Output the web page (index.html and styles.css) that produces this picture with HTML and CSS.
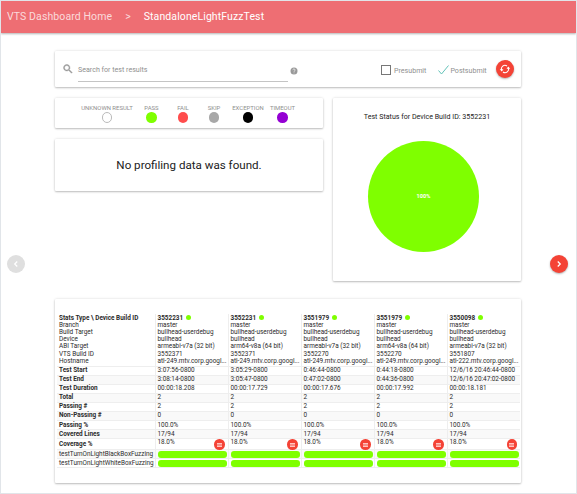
FILE: index.html
```html
<!DOCTYPE html>
<html lang="en">
<head>
<meta charset="utf-8">
<title>VTS Dashboard</title>
<link rel="stylesheet" href="styles.css">
</head>
<body>
<nav class="topbar"><a class="home">VTS Dashboard Home</a><span class="sep">&gt;</span><a class="current">StandaloneLightFuzzTest</a></nav>
<button class="round prev" aria-label="Previous"><svg viewBox="0 0 24 24"><path d="M15 6l-6 6 6 6"/></svg></button>
<button class="round next" aria-label="Next"><svg viewBox="0 0 24 24"><path d="M9 6l6 6-6 6"/></svg></button>
<main>
  <section class="card search">
    <svg class="lens" viewBox="0 0 24 24"><path d="M15.5 14h-.8l-.3-.3A6.5 6.5 0 1 0 13.700 14.400l.3.3v.8l5 5 1.500-1.500zm-6 0a4.500 4.500 0 1 1 0-9 4.500 4.500 0 0 1 0 9z"/></svg>
    <div class="field">Search for test results</div>
    <svg class="help" viewBox="0 0 24 24"><circle cx="12" cy="12" r="10.500"/><path d="M8.500 9.500c0-5 7-4.500 7-.5 0 2.500-3.500 2.500-3.500 5.500M12 16.500v2.500"/></svg>
    <label class="pre"><span class="box"></span>Presubmit</label>
    <label class="post"><svg viewBox="0 0 11 10"><path d="M.5 5.500l3 3.500L10.500.5"/></svg>Postsubmit</label>
    <button class="round refresh" aria-label="Refresh"><svg viewBox="0 0 24 24"><path d="M5.500 14.500a7 7 0 0 1 10.500-8.500M18.500 9.500a7 7 0 0 1-10.500 8.500"/><path class="tip" d="M1.500 12.500h7.500l-3.500 4.500zM22.500 11.500h-7.500l3.500-4.500z"/></svg></button>
  </section>
  <div class="columns">
    <div class="left">
      <section class="card legend">
        <div class="key k1">UNKNOWN RESULT<i class="unknown"></i></div>
        <div class="key k2">PASS<i class="pass"></i></div>
        <div class="key k3">FAIL<i class="fail"></i></div>
        <div class="key k4">SKIP<i class="skip"></i></div>
        <div class="key k5">EXCEPTION<i class="exception"></i></div>
        <div class="key k6">TIMEOUT<i class="timeout"></i></div>
      </section>
      <section class="card profiling">No profiling data was found.</section>
    </div>
    <section class="card status">
      <h2>Test Status for Device Build ID: 3552231</h2>
      <div class="pie">100%</div>
    </section>
  </div>
  <section class="card results">
    <table>
      <colgroup><col class="names"><col><col><col><col><col></colgroup>
      <tbody>
      <tr class="head">
        <th><b>Stats Type \ Device Build ID</b><br>Branch<br>Build Target<br>Device<br>ABI Target<br>VTS Build ID<br>Hostname</th>
        <td><b>3552231</b><i class="dot"></i><br>master<br>bullhead-userdebug<br>bullhead<br>armeabi-v7a (32 bit)<br>3552371<br>atl-249.mtv.corp.googl...</td>
        <td><b>3552231</b><i class="dot"></i><br>master<br>bullhead-userdebug<br>bullhead<br>arm64-v8a (64 bit)<br>3552371<br>atl-249.mtv.corp.googl...</td>
        <td><b>3551979</b><i class="dot"></i><br>master<br>bullhead-userdebug<br>bullhead<br>armeabi-v7a (32 bit)<br>3552270<br>atl-249.mtv.corp.googl...</td>
        <td><b>3551979</b><i class="dot"></i><br>master<br>bullhead-userdebug<br>bullhead<br>arm64-v8a (64 bit)<br>3552270<br>atl-249.mtv.corp.googl...</td>
        <td><b>3550098</b><i class="dot"></i><br>master<br>bullhead-userdebug<br>bullhead<br>armeabi-v7a (32 bit)<br>3551807<br>atl-222.mtv.corp.googl...</td>
      </tr>
      <tr><th>Test Start</th><td>3:07:56-0800</td><td>3:05:29-0800</td><td>0:46:44-0800</td><td>0:44:18-0800</td><td>12/6/16 20:46:44-0800</td></tr>
      <tr><th>Test End</th><td>3:08:14-0800</td><td>3:05:47-0800</td><td>0:47:02-0800</td><td>0:44:36-0800</td><td>12/6/16 20:47:02-0800</td></tr>
      <tr><th>Test Duration</th><td>00:00:18.208</td><td>00:00:17.729</td><td>00:00:17.676</td><td>00:00:17.992</td><td>00:00:18.181</td></tr>
      <tr><th>Total</th><td>2</td><td>2</td><td>2</td><td>2</td><td>2</td></tr>
      <tr><th>Passing #</th><td>2</td><td>2</td><td>2</td><td>2</td><td>2</td></tr>
      <tr><th>Non-Passing #</th><td>0</td><td>0</td><td>0</td><td>0</td><td>0</td></tr>
      <tr><th>Passing %</th><td>100.0%</td><td>100.0%</td><td>100.0%</td><td>100.0%</td><td>100.0%</td></tr>
      <tr><th>Covered Lines</th><td>17/94</td><td>17/94</td><td>17/94</td><td>17/94</td><td>17/94</td></tr>
      <tr class="coverage"><th>Coverage %</th>
        <td><div class="cov">18.0%<span class="menu"><i></i></span></div></td>
        <td><div class="cov">18.0%<span class="menu"><i></i></span></div></td>
        <td><div class="cov">18.0%<span class="menu"><i></i></span></div></td>
        <td><div class="cov">18.0%<span class="menu"><i></i></span></div></td>
        <td><div class="cov">18.0%<span class="menu"><i></i></span></div></td></tr>
      <tr class="case"><th>testTurnOnLightBlackBoxFuzzing</th><td><div class="bar"></div></td><td><div class="bar"></div></td><td><div class="bar"></div></td><td><div class="bar"></div></td><td><div class="bar"></div></td></tr>
      <tr class="case"><th>testTurnOnLightWhiteBoxFuzzing</th><td><div class="bar"></div></td><td><div class="bar"></div></td><td><div class="bar"></div></td><td><div class="bar"></div></td><td><div class="bar"></div></td></tr>
      </tbody>
    </table>
  </section>
</main>
</body>
</html>
```
FILE: styles.css
```css
* { box-sizing: border-box; }
body {
  margin: 0;
  height: 494px;
  overflow: hidden;
  border: 1px solid #e1e5e9;
  background: #fff;
  color: #2b2b2b;
  font-family: Roboto, "Liberation Sans", sans-serif;
}
.topbar {
  display: flex;
  align-items: center;
  height: 32px;
  padding: 0 0 1px 6px;
  background: #ee6e73;
  box-shadow: 0 1px 2px rgba(0, 0, 0, .3);
  color: #fff;
  font-size: 10.5px;
  letter-spacing: .1px;
}
.home, .sep { color: rgba(255, 255, 255, .75); }
.sep { margin: 0 13px; }
main { width: 466px; margin: 18px 0 0 54px; }
.card {
  background: #fff;
  border-radius: 1px;
  box-shadow: 0 1px 2px rgba(0, 0, 0, .22), 0 0 3px rgba(0, 0, 0, .12);
}
.round {
  display: flex;
  align-items: center;
  justify-content: center;
  width: 18px;
  height: 18px;
  padding: 0;
  border: 0;
  border-radius: 50%;
  background: #f44336;
  box-shadow: 0 1px 2px rgba(0, 0, 0, .3);
}
.round svg { width: 10px; height: 10px; fill: none; stroke: #fff; stroke-width: 3; }
.round.prev { position: absolute; left: 7px; top: 255px; background: #dfdfdf; box-shadow: none; }
.round.next { position: absolute; left: 550px; top: 255px; }

.search {
  display: flex;
  align-items: center;
  height: 36px;
  padding: 0 7px 0 7px;
  color: #8f8f8f;
  font-size: 7.1px;
}
.lens { width: 12px; height: 12px; fill: #999; stroke: #999; stroke-width: .8; }
.field {
  width: 210px;
  height: 21px;
  margin: 4px 0 0 4px;
  padding-top: 4px;
  line-height: 10px;
  border-bottom: 1.5px solid #c4c4c4;
}
.help { width: 8px; height: 8px; margin: 3px 0 0 2px; fill: #999; }
.help path { fill: none; stroke: #fff; stroke-width: 2; }
.search label { display: flex; align-items: center; margin-top: 2px; }
.pre { margin-left: 83px; }
.box { width: 10px; height: 10px; margin-right: 3px; border: 1px solid #777; }
.post { margin-left: 12px; }
.post svg { width: 11px; height: 10px; margin-right: 1px; fill: none; stroke: #62c2b8; }
.refresh { margin: 0 0 1px auto; }
.refresh svg { width: 12px; height: 12px; stroke-width: 2.2; }
.refresh .tip { fill: #fff; stroke: none; }

.columns { display: flex; justify-content: space-between; margin-top: 11px; }
.left { width: 268px; }
.legend { display: flex; height: 30px; padding: 6px 0 0 26px; color: #8f8f8f; font-size: 5.95px; line-height: 8px; }
.key { display: flex; flex-direction: column; align-items: center; white-space: nowrap; }
.key i { width: 10.500px; height: 10.500px; border-radius: 50%; }
.k1 { width: 52px; }
.k2 { width: 37px; }
.k3 { width: 26px; }
.k4 { width: 36px; }
.k5 { width: 32px; }
.k6 { width: 37px; }
.unknown { border: 1px solid #bbb; }
.pass { background: #7fff00; }
.fail { background: #ff4d4d; }
.skip { background: #a8a8a8; }
.exception { background: #000; }
.timeout { background: #9400d3; }
.profiling { height: 52px; margin-top: 11px; color: #212121; font-size: 11.6px; line-height: 53px; text-align: center; }
.status { width: 188px; height: 183px; padding-top: 14px; }
.status h2 { margin: 0; color: #222; font-size: 7.1px; font-weight: 400; line-height: 10px; text-align: center; }
.pie {
  width: 111px;
  height: 111px;
  margin: 19px 0 0 35px;
  border-radius: 50%;
  background: #7fff00;
  color: #fff;
  font-size: 5.6px;
  font-weight: 700;
  line-height: 111px;
  text-align: center;
}

.results { height: 184px; margin-top: 18px; padding: 15px 1px 0 2px; }
table { width: 463px; table-layout: fixed; border-collapse: collapse; font-size: 6.4px; line-height: 7.17px; }
col.names { width: 98px; }
th, td { height: 9.1px; padding: 0 0 0 2px; border-bottom: 1px solid #eee; text-align: left; white-space: nowrap; }
td { border-left: 1px solid #eee; }
tr:nth-child(odd) { background: #f9f9f9; }
tr.head { background: none; vertical-align: top; }
.head th { font-weight: 400; }
.head th, .head td { height: 52px; padding-top: .8px; }
.dot { display: inline-block; width: 5px; height: 5px; margin-left: 3px; border-radius: 50%; background: #7fff00; }
.coverage td, .coverage th { height: 11px; }
.cov { display: flex; justify-content: space-between; height: 10px; padding-right: 3px; }
.menu { display: flex; align-items: center; justify-content: center; width: 10.500px; height: 10.500px; border-radius: 50%; background: #f44336; }
.menu i { width: 5px; height: 4px; border: solid #ffc5c0; border-width: 1px 0; background: #f98e86; }
.case th { font-weight: 400; }
.bar { width: 69px; height: 7px; border-radius: 3px; background: #7fff00; }
```
